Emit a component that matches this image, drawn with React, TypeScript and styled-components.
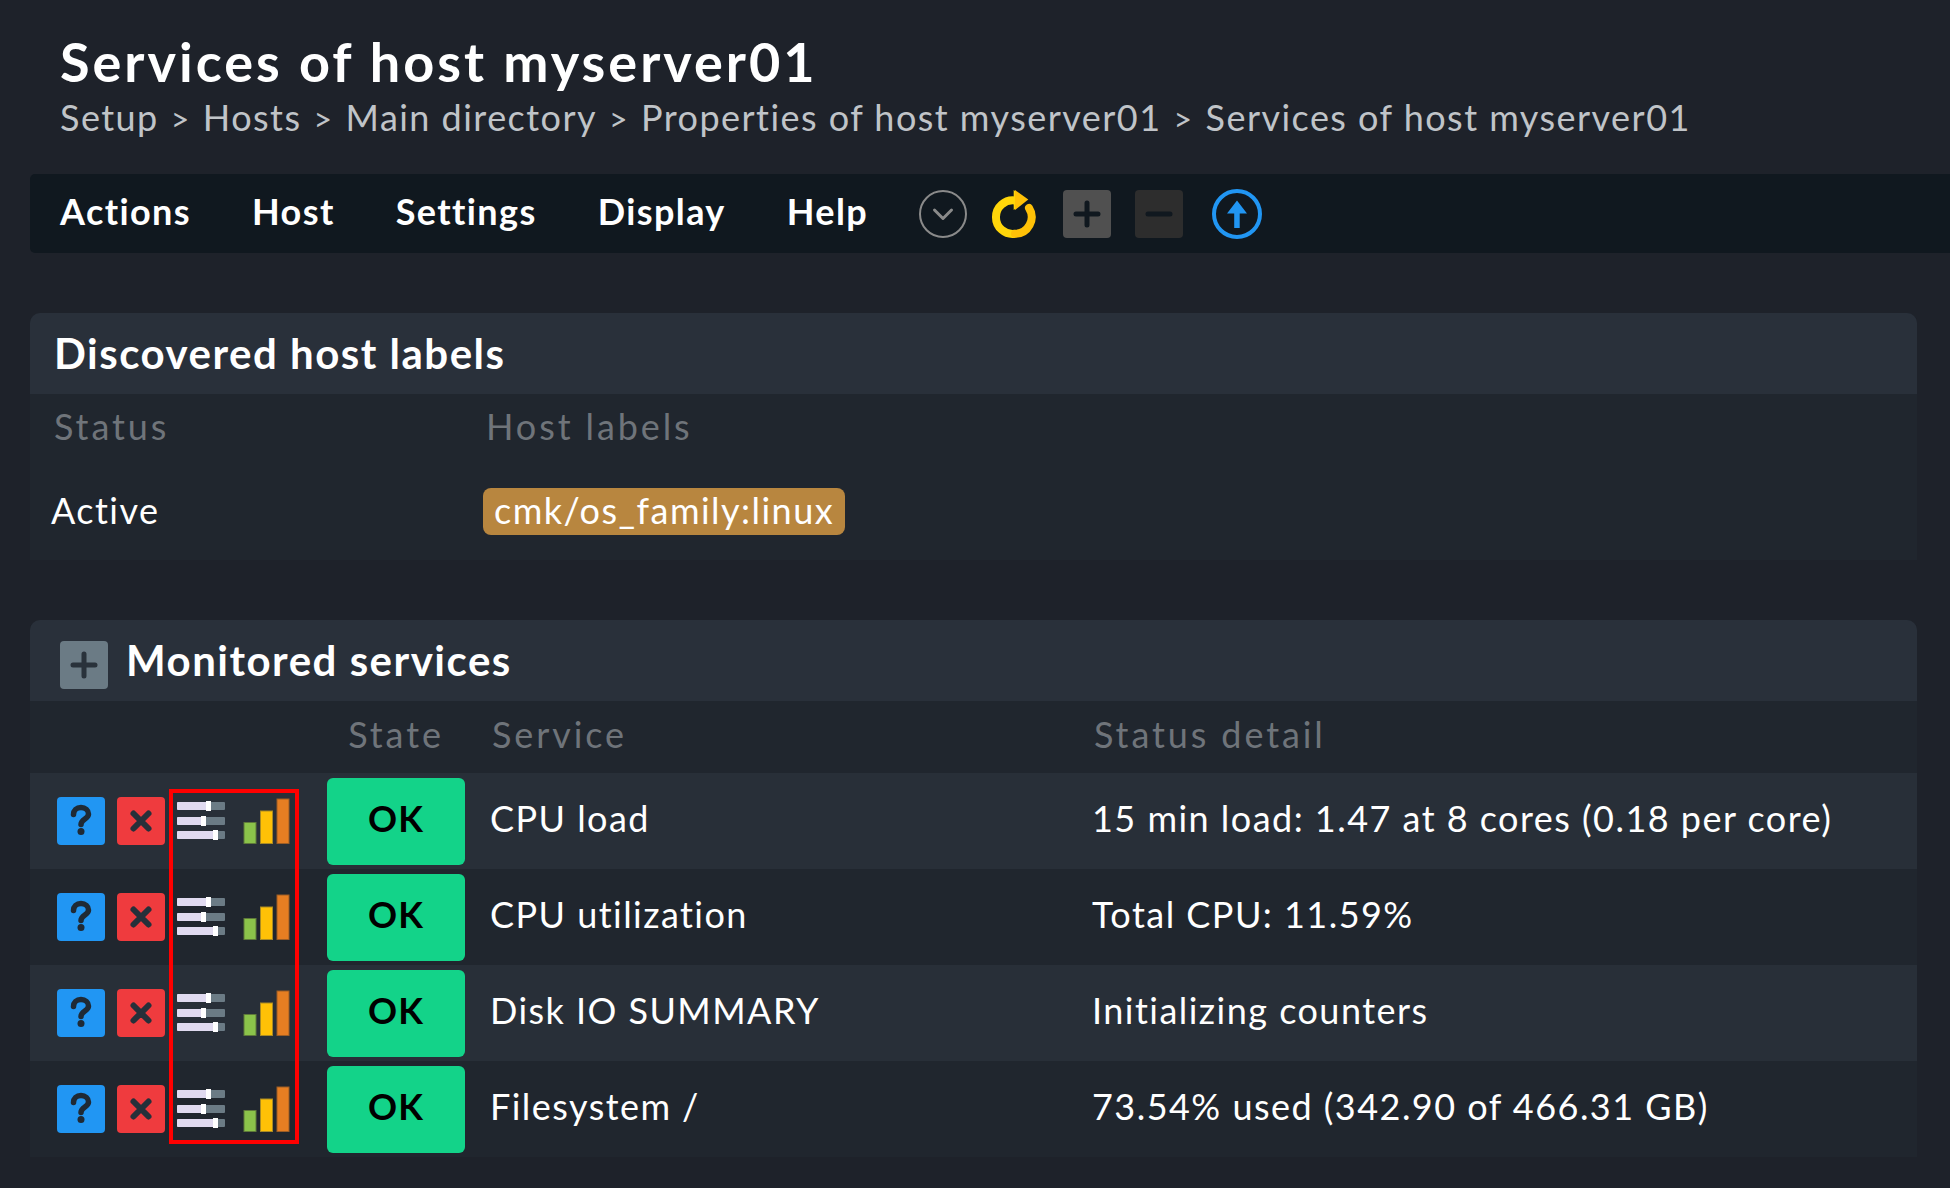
import styled, { createGlobalStyle } from "styled-components";

const crumbs = ["Setup", "Hosts", "Main directory", "Properties of host myserver01", "Services of host myserver01"];
const menus = ["Actions", "Host", "Settings", "Display", "Help"];
const services = [
  { name: "CPU load", detail: "15 min load: 1.47 at 8 cores (0.18 per core)" },
  { name: "CPU utilization", detail: "Total CPU: 11.59%" },
  { name: "Disk IO SUMMARY", detail: "Initializing counters" },
  { name: "Filesystem /", detail: "73.54% used (342.90 of 466.31 GB)" },
];

function SlidersIcon() {
  return (
    <svg width="48" height="48" viewBox="0 0 48 48">
      <rect x="0" y="5" width="48" height="8" rx="1" fill="#6b7b85" />
      <rect x="0" y="5" width="30" height="8" rx="1" fill="#e0daf0" />
      <rect x="29" y="4" width="5" height="10" fill="#fff" />
      <rect x="0" y="20" width="48" height="8" rx="1" fill="#6b7b85" />
      <rect x="0" y="20" width="25" height="8" rx="1" fill="#e0daf0" />
      <rect x="24" y="19" width="5" height="10" fill="#fff" />
      <rect x="0" y="34" width="48" height="8" rx="1" fill="#6b7b85" />
      <rect x="0" y="34" width="37" height="8" rx="1" fill="#e0daf0" />
      <rect x="36" y="33" width="5" height="10" fill="#fff" />
    </svg>
  );
}

function BarsIcon() {
  return (
    <svg width="48" height="48" viewBox="0 0 48 48">
      <rect x="1" y="25.500" width="12" height="21" fill="#8bc34a" stroke="#5f7a3a" strokeWidth="1" />
      <rect x="17.500" y="14" width="12" height="32.500" fill="#ffc107" stroke="#a98a24" strokeWidth="1" />
      <rect x="34" y="2" width="12" height="44.500" fill="#e67e22" stroke="#9c5d25" strokeWidth="1" />
    </svg>
  );
}

function RefreshIcon() {
  return (
    <svg width="48" height="48" viewBox="0 0 48 48">
      <path d="M24 10.500A16.800 16.800 0 1 0 24 43.800" fill="none" stroke="#ffd60a" strokeWidth="8" />
      <path d="M24 43.800A16.800 16.800 0 0 0 38 18" fill="none" stroke="#ffc107" strokeWidth="8" strokeLinecap="round" />
      <path d="M24 0v20L37.300 9.500z" fill="#ffc107" />
      <path d="M22.700 0L24 .9V19L22.700 20z" fill="#ffd60a" />
    </svg>
  );
}

export default function App() {
  return (
    <Page>
      <GlobalStyle />
      <Title>Services of host myserver01</Title>
      <Breadcrumb>
        {crumbs.map((c, i) => (
          <span key={c}>
            {i > 0 && <Sep>&gt;</Sep>}
            {c}
          </span>
        ))}
      </Breadcrumb>

      <Toolbar>
        {menus.map((m) => (
          <MenuItem key={m}>{m}</MenuItem>
        ))}
        <ToolIcons>
          <svg width="48" height="48" viewBox="0 0 48 48">
            <circle cx="24" cy="24" r="23" fill="none" stroke="#8a8a8a" strokeWidth="2" />
            <path d="M15.500 20l8.500 8.500 8.500-8.500" fill="none" stroke="#8a8a8a" strokeWidth="3" strokeLinecap="round" strokeLinejoin="round" />
          </svg>
          <RefreshSlot>
            <RefreshIcon />
          </RefreshSlot>
          <SquareButton $bg="#505050" $ml={24}>
            <svg width="48" height="48" viewBox="0 0 48 48">
              <path d="M24 13v22M13 24h22" stroke="#10181f" strokeWidth="5" strokeLinecap="round" />
            </svg>
          </SquareButton>
          <SquareButton $bg="#2d2d2d" $ml={24}>
            <svg width="48" height="48" viewBox="0 0 48 48">
              <path d="M13 24h22" stroke="#10181f" strokeWidth="5" strokeLinecap="round" />
            </svg>
          </SquareButton>
          <UpSlot>
            <svg width="50" height="50" viewBox="0 0 50 50">
              <circle cx="25" cy="25" r="23" fill="none" stroke="#2196f3" strokeWidth="4" />
              <path d="M25 11.500L35 24.500H27.700V39H22.200V24.500H15z" fill="#2196f3" />
            </svg>
          </UpSlot>
        </ToolIcons>
      </Toolbar>

      <Panel $mt={60}>
        <PanelHead>
          <PanelTitle>Discovered host labels</PanelTitle>
        </PanelHead>
        <LabelGrid>
          <HeadCell $pad={24}>Status</HeadCell>
          <HeadCell $pad={3}>Host labels</HeadCell>
          <ActiveCell>Active</ActiveCell>
          <ChipCell>
            <Chip>cmk/os_family:linux</Chip>
          </ChipCell>
        </LabelGrid>
      </Panel>

      <Panel $mt={60}>
        <PanelHead>
          <ExpandBox>
            <svg width="48" height="48" viewBox="0 0 48 48">
              <path d="M24 13v22M13 24h22" stroke="#29323b" strokeWidth="5" strokeLinecap="round" />
            </svg>
          </ExpandBox>
          <PanelTitle $flush>Monitored services</PanelTitle>
        </PanelHead>
        <ColumnHead>
          <span />
          <StateHead>State</StateHead>
          <ServiceHead>Service</ServiceHead>
          <DetailHead>Status detail</DetailHead>
        </ColumnHead>
        <Rows>
          {services.map((s) => (
            <Row key={s.name}>
              <IconCell>
                <HelpButton>
                  <svg width="48" height="48" viewBox="0 0 48 48">
                    <path d="M16.500 17.500c0-4 3-7 7.500-7s7.500 3 7.500 6.500c0 5-7.500 5-7.500 10.500" fill="none" stroke="#1f2a35" strokeWidth="5.500" strokeLinecap="round" />
                    <circle cx="24" cy="34.500" r="3.500" fill="#1f2a35" />
                  </svg>
                </HelpButton>
                <DeleteButton>
                  <svg width="48" height="48" viewBox="0 0 48 48">
                    <path d="M16.500 16.500l15 15M31.500 16.500l-15 15" stroke="#26303a" strokeWidth="6" strokeLinecap="round" />
                  </svg>
                </DeleteButton>
                <SlidersIcon />
                <BarsSlot>
                  <BarsIcon />
                </BarsSlot>
              </IconCell>
              <StateBadge>OK</StateBadge>
              <ServiceName>{s.name}</ServiceName>
              <Detail>{s.detail}</Detail>
            </Row>
          ))}
          <Highlight />
        </Rows>
      </Panel>
    </Page>
  );
}

/* ===== layout ===== */

const GlobalStyle = createGlobalStyle`
  html, body {
    margin: 0;
    background: #1e222a;
  }
`;

const Page = styled.div`
  box-sizing: border-box;
  min-height: 100vh;
  padding: 30px 0 0 30px;
  overflow: hidden;
  background: #1e222a;
  font-family: Lato, "Liberation Sans", sans-serif;
  color: #fff;
`;

const Title = styled.h1`
  margin: 0 0 0 30px;
  font-size: 54px;
  line-height: 64px;
  font-weight: 700;
  letter-spacing: 3px;
`;

const Breadcrumb = styled.div`
  margin-left: 30px;
  font-size: 36px;
  line-height: 46px;
  letter-spacing: 1.46px;
  color: #c0c4c8;
  white-space: nowrap;
`;

const Sep = styled.span`
  margin: 0 12px;
  font-size: 32px;
  line-height: 0;
`;

/* ===== toolbar ===== */

const Toolbar = styled.div`
  display: flex;
  align-items: center;
  height: 79px;
  margin-top: 34px;
  padding-left: 30px;
  background: #10181f;
  border-radius: 5px 0 0 5px;
`;

const MenuItem = styled.span`
  margin-right: 61px;
  padding-bottom: 5px;
  font-size: 36px;
  font-weight: 700;
  letter-spacing: 1.4px;
  &:last-of-type {
    margin-right: 0;
  }
`;

const ToolIcons = styled.div`
  display: flex;
  align-items: center;
  margin-left: 51px;
  svg {
    display: block;
  }
`;

const RefreshSlot = styled.div`
  margin-left: 24px;
`;

const SquareButton = styled.div<{ $bg: string; $ml: number }>`
  width: 48px;
  height: 48px;
  margin-left: ${(p) => p.$ml}px;
  background: ${(p) => p.$bg};
  border-radius: 4px;
`;

const UpSlot = styled.div`
  margin-left: 29px;
`;

/* ===== panels ===== */

const Panel = styled.section<{ $mt: number }>`
  width: 1887px;
  margin-top: ${(p) => p.$mt}px;
  background: #20262e;
  border-radius: 10px 10px 0 0;
`;

const PanelHead = styled.div`
  display: flex;
  align-items: center;
  height: 81px;
  background: #29303a;
  border-radius: 10px 10px 0 0;
  padding-left: 30px;
`;

const PanelTitle = styled.h2<{ $flush?: boolean }>`
  margin: 0 0 2px ${(p) => (p.$flush ? "18px" : "-6px")};
  font-size: 42px;
  font-weight: 700;
  letter-spacing: 1.5px;
`;

const LabelGrid = styled.div`
  display: grid;
  grid-template-columns: 453px 1fr;
  grid-template-rows: 68px 98px;
  align-items: center;
`;

const HeadCell = styled.div<{ $pad: number }>`
  padding: 0 0 5px ${(p) => p.$pad}px;
  font-size: 36px;
  letter-spacing: 2.9px;
  color: #6f747a;
`;

const ActiveCell = styled.div`
  padding: 0 0 2px 21px;
  font-size: 36px;
  letter-spacing: 1.45px;
`;

const ChipCell = styled.div`
  padding-top: 1px;
`;

const Chip = styled.span`
  display: inline-block;
  padding: 0 11px;
  height: 47px;
  line-height: 45px;
  background: #b8863f;
  border-radius: 8px;
  font-size: 36px;
  letter-spacing: 1.47px;
`;

const ExpandBox = styled.div`
  width: 48px;
  height: 48px;
  margin-top: 8px;
  background: #6b7b85;
  border-radius: 4px;
`;

/* ===== services table ===== */

const columns = "297px 138px 627px 1fr";

const ColumnHead = styled.div`
  display: grid;
  grid-template-columns: ${columns};
  align-items: center;
  height: 72px;
  padding-bottom: 6px;
  box-sizing: border-box;
  font-size: 36px;
  letter-spacing: 2.9px;
  color: #6f747a;
`;

const StateHead = styled.div`
  text-align: center;
`;

const ServiceHead = styled.div`
  padding-left: 27px;
`;

const DetailHead = styled.div`
  padding-left: 2px;
`;

const Rows = styled.div`
  position: relative;
`;

const Row = styled.div`
  display: grid;
  grid-template-columns: ${columns};
  align-items: center;
  height: 96px;
  background: #20262e;
  &:nth-child(odd) {
    background: #282f38;
  }
`;

const IconCell = styled.div`
  display: flex;
  align-items: center;
  gap: 12px;
  padding-left: 27px;
  svg {
    display: block;
  }
`;

const HelpButton = styled.div`
  width: 48px;
  height: 48px;
  background: #2196f3;
  border-radius: 4px;
`;

const DeleteButton = styled.div`
  width: 48px;
  height: 48px;
  background: #ef3b3e;
  border-radius: 4px;
`;

const BarsSlot = styled.div`
  margin-left: 6px;
`;

const StateBadge = styled.div`
  height: 87px;
  line-height: 81px;
  text-align: center;
  background: #13d389;
  border-radius: 6px;
  color: #000;
  font-size: 36px;
  font-weight: 700;
  letter-spacing: 1px;
`;

const ServiceName = styled.div`
  padding: 0 0 7px 25px;
  font-size: 36px;
  letter-spacing: 1.45px;
`;

const Detail = styled.div`
  padding-bottom: 7px;
  font-size: 36px;
  letter-spacing: 1.47px;
  white-space: nowrap;
`;

/** 스크린샷에 표시된 빨간 강조 테두리 */
const Highlight = styled.div`
  position: absolute;
  left: 139px;
  top: 16px;
  width: 130px;
  height: 355px;
  box-sizing: border-box;
  border: 4px solid #ff0000;
`;
